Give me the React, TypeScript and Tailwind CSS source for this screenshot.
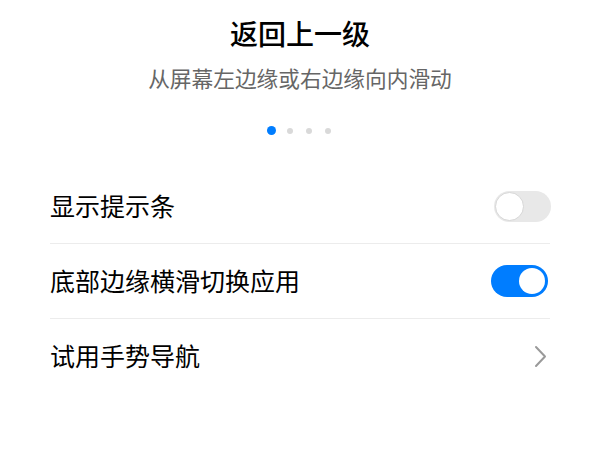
import { useState } from "react";

const FONT = { fontFamily: '"Noto Sans CJK SC", "Noto Sans", sans-serif' };

function Toggle({ on, className = "" }: { on: boolean; className?: string }) {
  if (on) {
    return (
      <div className={`flex h-[32px] w-[57px] items-center justify-end rounded-full bg-[#007dff] pr-[3px] ${className}`}>
        <div className="h-[26px] w-[26px] rounded-full bg-white" />
      </div>
    );
  }
  return (
    <div className={`flex h-[31px] w-[57px] items-center rounded-full bg-[#e8e8e8] pl-[1px] ${className}`}>
      <div className="h-[29px] w-[29px] rounded-full border-[1.5px] border-[#d6d6d6] bg-white" />
    </div>
  );
}

function Chevron() {
  return (
    <svg width="13" height="23" viewBox="0 0 13 23" className="mr-[3px]">
      <polyline
        points="2,2 11,11.5 2,21"
        fill="none"
        stroke="#9a9a9a"
        strokeWidth="2"
        strokeLinecap="round"
        strokeLinejoin="round"
      />
    </svg>
  );
}

export default function App() {
  const [page] = useState(0);

  return (
    <div className="h-[450px] w-[600px] overflow-hidden bg-white pt-[13px]" style={FONT}>
      <h1 className="h-[40px] text-center text-[28px] font-medium leading-[40px] text-black">返回上一级</h1>
      <p className="mt-[10px] text-center text-[21.7px] leading-[30px] text-[#666666]">从屏幕左边缘或右边缘向内滑动</p>

      {/* page indicator */}
      <div className="mt-[33px] flex h-[9px] items-center justify-center pr-[2px]">
        {[0, 1, 2, 3].map((i) =>
          i === page ? (
            <div key={i} className="h-[9px] w-[9px] rounded-full bg-[#007dff]" />
          ) : (
            <div
              key={i}
              className={`h-[6px] w-[6px] rounded-full bg-[#d9d9d9] ${i === 1 ? "ml-[11px]" : "ml-[13px]"}`}
            />
          )
        )}
      </div>

      <div className="mt-[34px] px-[50px] text-[25px] text-black">
        <div className="flex h-[75px] items-center justify-between border-b border-[#ececec]">
          <span>显示提示条</span>
          <Toggle on={false} className="-mr-px" />
        </div>
        <div className="flex h-[75px] items-center justify-between border-b border-[#ececec]">
          <span>底部边缘横滑切换应用</span>
          <Toggle on className="mr-[2px]" />
        </div>
        <div className="flex h-[74px] items-center justify-between">
          <span>试用手势导航</span>
          <Chevron />
        </div>
      </div>
    </div>
  );
}
